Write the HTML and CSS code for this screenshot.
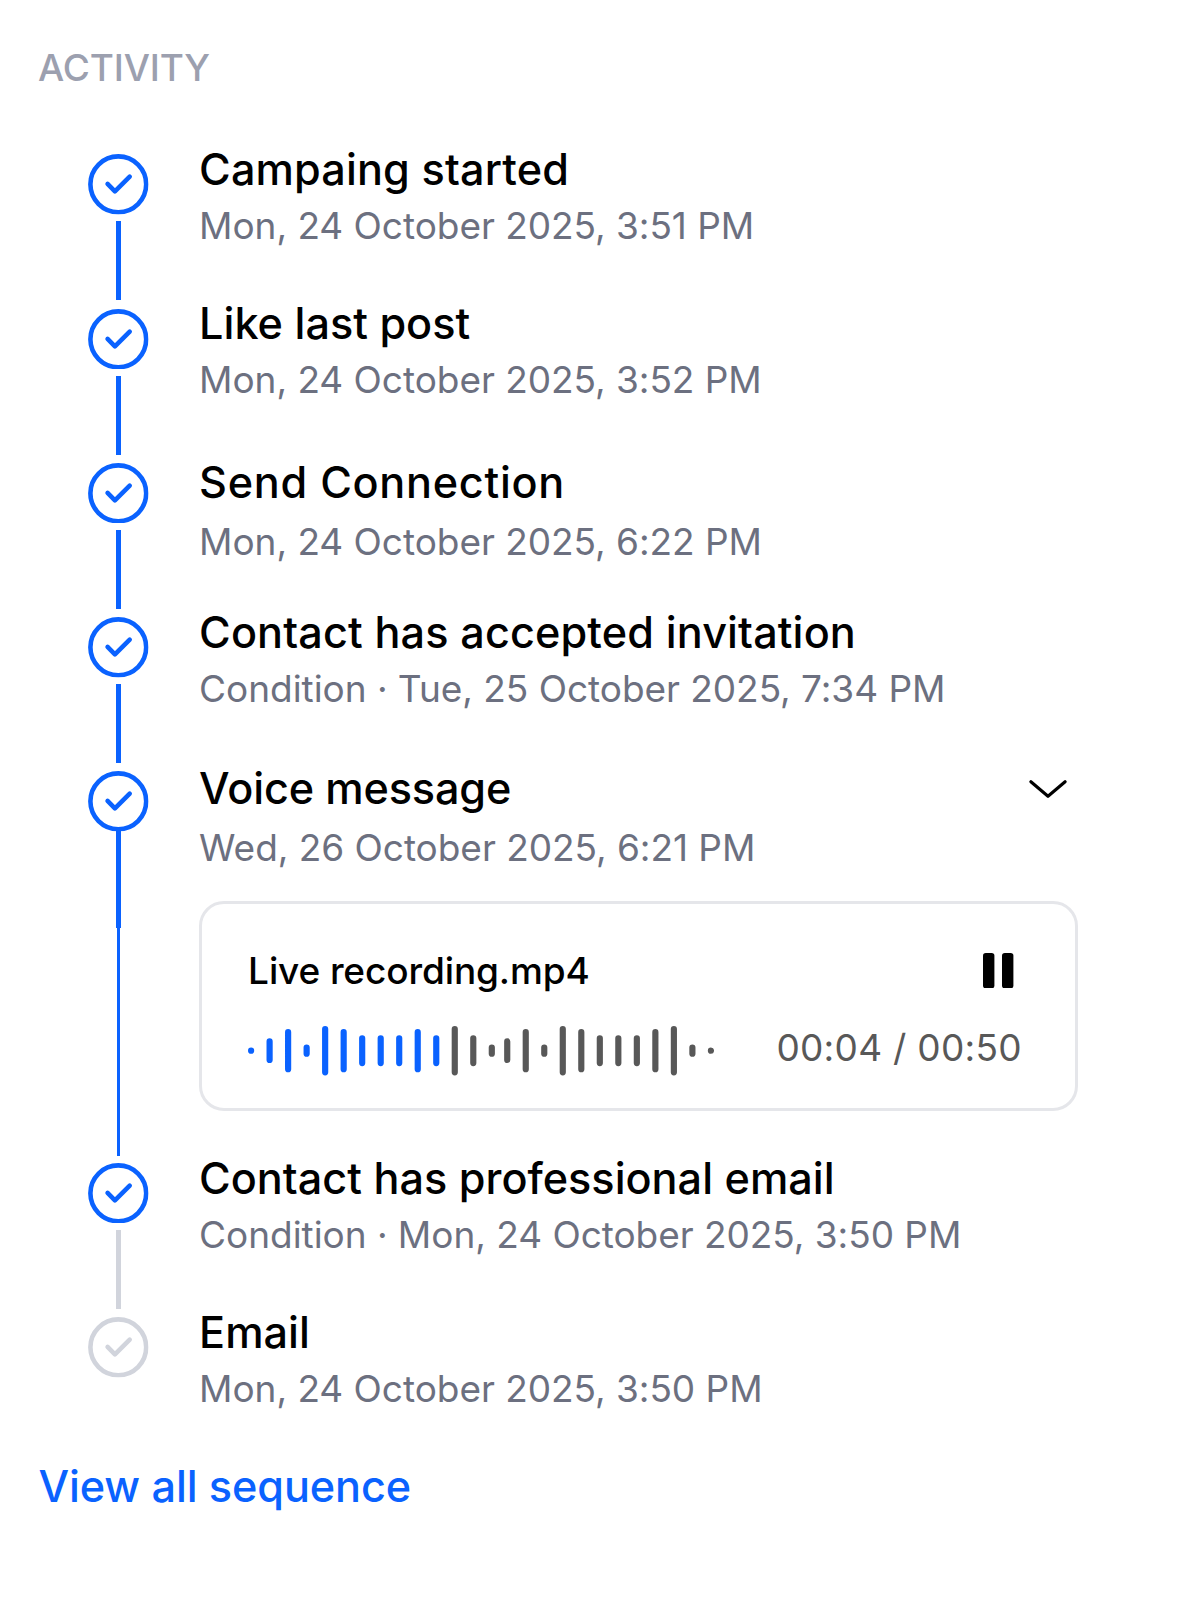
FILE: index.html
```
<!DOCTYPE html>
<html lang="en">
<head>
  <meta charset="UTF-8">
  <meta name="viewport" content="width=device-width, initial-scale=1.0">
  <title>Activity</title>
  <link rel="stylesheet" href="styles.css">
</head>
<body>
  <!-- Check icon shared by every step -->
  <svg width="0" height="0" class="sprite">
    <symbol id="check" viewBox="0 0 60.6 60.6">
      <circle cx="30.3" cy="30.3" r="27.9" />
      <path d="M19.6 30L26.9 37.3L41.7 22.7" />
    </symbol>
  </svg>

  <section class="activity">
    <h2 class="activity-heading">ACTIVITY</h2>

    <ol class="steps">
      <li class="step">
        <div class="marker">
          <svg class="check"><use href="#check" /></svg>
          <span class="line"></span>
        </div>
        <div class="content">
          <h3 class="title title-spaced">Campaing started</h3>
          <p class="date">Mon, 24 October 2025, 3:51 PM</p>
        </div>
      </li>

      <li class="step">
        <div class="marker">
          <svg class="check"><use href="#check" /></svg>
          <span class="line"></span>
        </div>
        <div class="content">
          <h3 class="title">Like last post</h3>
          <p class="date">Mon, 24 October 2025, 3:52 PM</p>
        </div>
      </li>

      <li class="step step-send">
        <div class="marker">
          <svg class="check"><use href="#check" /></svg>
          <span class="line"></span>
        </div>
        <div class="content">
          <h3 class="title">Send Connection</h3>
          <p class="date">Mon, 24 October 2025, 6:22 PM</p>
        </div>
      </li>

      <li class="step">
        <div class="marker">
          <svg class="check"><use href="#check" /></svg>
          <span class="line"></span>
        </div>
        <div class="content">
          <h3 class="title title-spaced">Contact has accepted invitation</h3>
          <p class="date">Condition · Tue, 25 October 2025, 7:34 PM</p>
        </div>
      </li>

      <li class="step step-voice">
        <div class="marker">
          <svg class="check"><use href="#check" /></svg>
          <span class="line"></span>
          <span class="line line-thin"></span>
        </div>
        <div class="content">
          <div class="title-row">
            <h3 class="title">Voice message</h3>
            <svg class="chevron" viewBox="0 0 38 18">
              <path d="M1.9 1.7L19 16.3L36.1 1.7" />
            </svg>
          </div>
          <p class="date">Wed, 26 October 2025, 6:21 PM</p>

          <div class="player">
            <div class="player-row">
              <span class="file-name">Live recording.mp4</span>
              <svg class="pause" viewBox="0 0 31 35.4">
                <rect width="11.4" height="35.4" rx="2.8" />
                <rect x="19" width="11.4" height="35.4" rx="2.8" />
              </svg>
            </div>
            <div class="player-row">
              <svg class="wave" viewBox="0 0 151 16">
                <path class="played" d="M1 8h.01M7 5v6M13 2v12M19 7v2M25 1v14M31 2v12M37 4v8M43 4v8M49 4v8M55 2v12M61 4v8" />
                <path d="M67 1v14M73 4v8M79 7v2M84 5v6M90 2v12M96 7v2M102 1v14M108 2v12M114 4v8M120 4v8M126 4v8M132 2v12M138 1v14M144 7v2M150 8h.01" />
              </svg>
              <span class="time">00:04 / 00:50</span>
            </div>
          </div>
        </div>
      </li>

      <li class="step step-current">
        <div class="marker">
          <svg class="check"><use href="#check" /></svg>
          <span class="line"></span>
        </div>
        <div class="content">
          <h3 class="title">Contact has professional email</h3>
          <p class="date">Condition · Mon, 24 October 2025, 3:50 PM</p>
        </div>
      </li>

      <li class="step step-pending">
        <div class="marker">
          <svg class="check"><use href="#check" /></svg>
        </div>
        <div class="content">
          <h3 class="title">Email</h3>
          <p class="date">Mon, 24 October 2025, 3:50 PM</p>
        </div>
      </li>
    </ol>

    <a href="#" class="view-all">View all sequence</a>
  </section>
</body>
</html>
```
FILE: styles.css
```
* {
  box-sizing: border-box;
  margin: 0;
  padding: 0;
}

body {
  font-family: Inter, "Liberation Sans", sans-serif;
  background-color: #fff;
  color: #000;
}

.sprite {
  display: block;
}

.activity {
  width: 1200px;
  height: 1615px;
  padding: 46px 122.2px 0 38px;
}

.activity-heading {
  font-size: 37px;
  font-weight: 450;
  line-height: 44px;
  letter-spacing: -0.15px;
  color: #9ca0af;
}

.steps {
  list-style: none;
  margin-top: 52.3px;
  padding-left: 50.3px;
}

.step {
  display: grid;
  grid-template-columns: 60.6px 1fr;
  column-gap: 50.2px;
  height: 154.32px;
  color: #0a62ff;
}

.marker {
  display: flex;
  flex-direction: column;
  align-items: center;
  padding-top: 11.9px;
}

.check {
  width: 60.6px;
  height: 60.6px;
  fill: none;
  stroke: currentColor;
  stroke-width: 4.6;
  stroke-linecap: round;
  stroke-linejoin: round;
}

.line {
  width: 5px;
  height: 79px;
  margin-top: 6.6px;
  background-color: currentColor;
}

.content {
  padding-top: 0.7px;
}

.title {
  font-size: 43.2px;
  font-weight: 500;
  line-height: 52px;
  letter-spacing: 0.01px;
  color: #000;
}

.title-spaced {
  letter-spacing: 0.13px;
}

.date {
  margin-top: 9px;
  font-size: 37px;
  line-height: 44px;
  letter-spacing: -0.04px;
  color: #6c7080;
}

.step-send .content {
  padding-top: 5px;
}

.step-send .title {
  letter-spacing: 0.72px;
}

.step-send .date {
  margin-top: 12px;
}

.step-voice {
  height: 391.4px;
}

.step-voice .content {
  padding-top: 2.7px;
}

.step-voice .title {
  letter-spacing: -0.14px;
}

.step-voice .date {
  margin-top: 12.2px;
}

.step-voice .line {
  height: 97px;
  margin-top: -1px;
}

.step-voice .line-thin {
  width: 3.5px;
  height: 228px;
  margin-top: 0;
}

.step-current .line,
.step-pending {
  color: #d1d4dc;
}

.title-row {
  display: flex;
  justify-content: space-between;
  align-items: center;
}

.chevron {
  width: 38px;
  height: 18px;
  margin: 1.6px 10.8px 0 0;
  fill: none;
  stroke: #000;
  stroke-width: 3.1;
  stroke-linecap: round;
  stroke-linejoin: round;
}

.player {
  height: 210px;
  margin-top: 30.3px;
  padding: 45px 53px 0 46px;
  border: 3px solid #e5e6ea;
  border-radius: 25px;
}

.player-row {
  display: flex;
  justify-content: space-between;
  align-items: center;
  height: 44px;
}

.player-row + .player-row {
  margin-top: 33px;
}

.file-name {
  font-size: 37px;
  font-weight: 500;
  letter-spacing: -0.12px;
  line-height: 44px;
  color: #000;
}

.pause {
  width: 31px;
  height: 35.4px;
  margin-right: 8px;
  fill: #000;
}

.wave {
  width: 466px;
  height: 49.4px;
  margin-top: 6.6px;
  flex-shrink: 0;
  fill: none;
  stroke: #585858;
  stroke-width: 2;
  stroke-linecap: round;
}

.wave .played {
  stroke: #0a62ff;
}

.time {
  font-size: 37px;
  line-height: 44px;
  letter-spacing: 0.27px;
  color: #585858;
}

.view-all {
  display: inline-block;
  margin-left: 0.5px;
  font-size: 43.2px;
  font-weight: 500;
  line-height: 52px;
  letter-spacing: -0.1px;
  color: #0a62ff;
  text-decoration: none;
}
```
